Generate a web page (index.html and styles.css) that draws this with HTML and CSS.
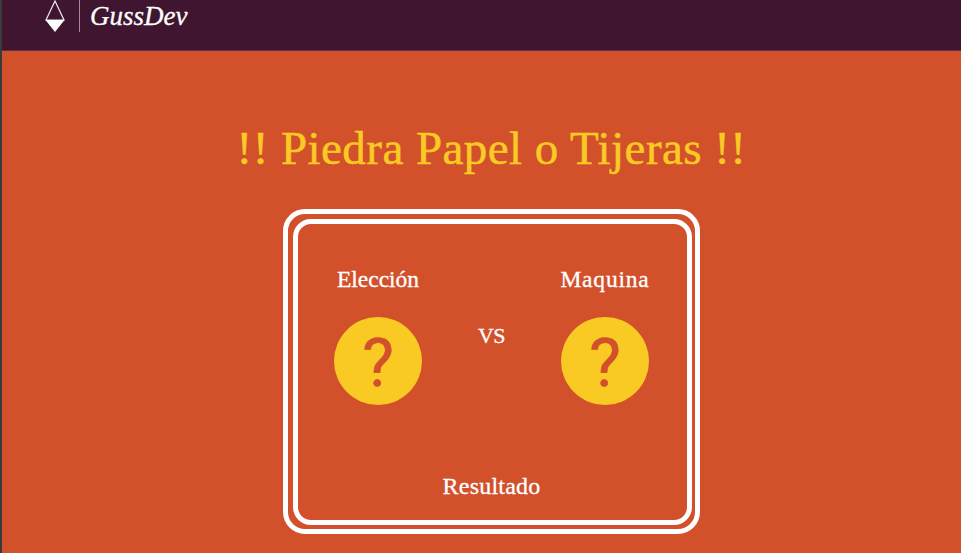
FILE: index.html
```html
<!DOCTYPE html>
<html lang="es">
    <head>
        <title>Piedra Papel o Tijeras</title>
        <link rel="stylesheet" href="styles.css">
    </head>

    <body>
        <header class="topBar">
            <svg class="logoIcon" width="22" height="33" viewBox="0 0 22 33" xmlns="http://www.w3.org/2000/svg">
                <path d="M11 1 L20 20 L2 20 Z" fill="none" stroke="#efe9ec" stroke-width="1.2"/>
                <path d="M1.5 20 H20.5 L11 32 Z" fill="#fff"/>
            </svg>
            <span class="logoLine"></span>
            <span class="logoText">GussDev</span>
        </header>

        <main class="gamePage">
            <h1 class="gameTitle">!! Piedra Papel o Tijeras !!</h1>

            <div class="outerBox">
                <div class="innerBox">
                    <div class="players">
                        <div class="playerName">Elección</div>
                        <div></div>
                        <div class="playerName machineName">Maquina</div>

                        <div class="choice">?</div>
                        <div class="versus">VS</div>
                        <div class="choice">?</div>
                    </div>
                    <div class="result">Resultado</div>
                </div>
            </div>
        </main>
    </body>
</html>
```

FILE: styles.css
```css
html, body {
    height: 100%;
    margin: 0;
    overflow: hidden;
}

body {
    border-left: 2px solid #3a3a3a;
    background-color: #d2512b;
    font-family: "Liberation Serif", serif;
    color: #fff;
}

/* Top bar */
.topBar {
    height: 50px;
    padding-left: 42px;
    display: flex;
    align-items: flex-start;
    background-color: #40152f;
    border-bottom: 1px solid #5a3048;
}

.logoLine {
    width: 1px;
    height: 32px;
    margin-left: 13px;
    background-color: #a08a97;
}

.logoText {
    margin-left: 10px;
    font-family: "Liberation Serif", serif;
    font-style: italic;
    font-size: 27px;
    line-height: 32px;
    -webkit-text-stroke: 0.3px #fff;
}

/* Game */
.gamePage {
    padding-left: 20px;
}

.gameTitle {
    margin: 67px 0 0;
    height: 91px;
    text-align: center;
    font-size: 47px;
    line-height: 60px;
    font-weight: normal;
    letter-spacing: 0.45px;
    -webkit-text-stroke: 0.5px #f9ca24;
    color: #f9ca24;
}

.outerBox {
    box-sizing: border-box;
    width: 417px;
    height: 325px;
    margin: 0 auto;
    padding: 5px 3px 4px 5px;
    border: 5px solid #fff;
    border-radius: 22px;
}

.innerBox {
    box-sizing: border-box;
    height: 100%;
    border: 5px solid #fff;
    border-radius: 18px;
    display: flex;
    flex-direction: column;
    align-items: center;
}

.players {
    display: grid;
    grid-template-columns: repeat(3, 113.5px);
    grid-template-rows: 30px 88px;
    row-gap: 23px;
    justify-items: center;
    margin-top: 40px;
    margin-right: 2px;
}

.playerName {
    font-size: 23.5px;
    line-height: 30px;
    white-space: nowrap;
    -webkit-text-stroke: 0.3px #fff;
}

.machineName {
    letter-spacing: 0.8px;
}

.choice {
    width: 88px;
    height: 88px;
    border-radius: 50%;
    background-color: #f9ca24;
    color: #d2512b;
    font-family: Roboto, sans-serif;
    font-size: 67px;
    line-height: 93px;
    text-align: center;
    -webkit-text-stroke: 0.6px #d2512b;
}

.versus {
    font-size: 22px;
    line-height: 30px;
    margin-top: 4px;
    letter-spacing: -0.5px;
    -webkit-text-stroke: 0.3px #fff;
}

.result {
    margin-top: 66px;
    margin-right: 2px;
    font-size: 24px;
    line-height: 30px;
    letter-spacing: 0.2px;
    -webkit-text-stroke: 0.3px #fff;
}
```
